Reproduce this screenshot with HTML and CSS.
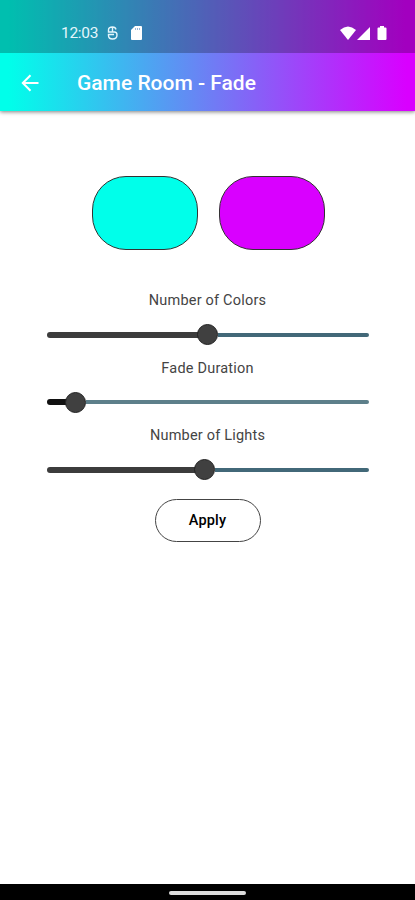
FILE: index.html
```html
<!DOCTYPE html>
<html lang="en">
<head>
    <meta charset="UTF-8">
    <meta name="viewport" content="width=device-width, initial-scale=1.0">
    <title>Game Room - Fade</title>
    <link rel="stylesheet" href="styles.css">
</head>
<body>
<div class="top">
  <div class="status">
    <span class="time">12:03</span>
    <svg class="app-icon" width="11" height="14" viewBox="0 0 11 14" fill="none" stroke="#e4f6fc" stroke-width="1.4">
      <path d="M9 3.500Q8.500 1 5.500 1Q1.500 1 1.500 4V6H7.500Q10 6 10 9Q10 13 5.500 13Q1.500 13 1.500 9.500V8.500H7M5.500 1V6"/>
    </svg>
    <svg class="sd-icon" width="11" height="14" viewBox="0 0 11 14">
      <path fill="#fff" d="M4 0H10Q11 0 11 1V13Q11 14 10 14H1Q0 14 0 13V4Z"/>
      <path stroke="#7fa5d0" stroke-width="0.8" d="M4.500 2V4M6.500 2V4M8.500 2V4"/>
    </svg>
    <svg class="signals" width="47" height="15" viewBox="0 0 47 15" fill="#fff">
      <path d="M0 4Q8-3 16 4L8 14Z"/>
      <path d="M30 1V14H17Z"/>
      <path d="M40 1.500V0H44V1.500H45.500Q46.500 1.500 46.500 2.500V13Q46.500 14 45.500 14H38.500Q37.500 14 37.500 13V2.500Q37.500 1.500 38.500 1.500Z"/>
    </svg>
  </div>
  <div class="header">
    <svg width="18" height="18" viewBox="0 0 18 18" fill="none" stroke="#fff" stroke-width="2">
      <path d="M17.500 9H2M9.500 1.300L1.800 9L9.500 16.700"/>
    </svg>
    <h1>Game Room - Fade</h1>
  </div>
</div>

<div class="content">
  <div class="colors">
    <div class="color cyan"></div>
    <div class="color purple"></div>
  </div>

  <div class="setting">
    <label>Number of Colors</label>
    <div class="slider"><div class="filled colors-fill"></div><div class="thumb"></div><div class="rest"></div></div>
  </div>
  <div class="setting">
    <label>Fade Duration</label>
    <div class="slider"><div class="filled fade-fill"></div><div class="thumb"></div><div class="rest light"></div></div>
  </div>
  <div class="setting">
    <label>Number of Lights</label>
    <div class="slider"><div class="filled lights-fill"></div><div class="thumb"></div><div class="rest"></div></div>
  </div>

  <button class="apply">Apply</button>
</div>

<div class="nav"><div class="handle"></div></div>
</body>
</html>
```

FILE: styles.css
```css
* { box-sizing: border-box; }
body {
  font-family: Roboto, sans-serif;
  margin: 0;
  height: 900px;
  display: flex;
  flex-direction: column;
  background-color: #fff;
  overflow: hidden;
}

/* Status bar and header share one gradient */
.top {
  height: 111px;
  flex: none;
  background: linear-gradient(90deg, #00ffea 2%, #d900ff 98%);
  box-shadow: 0 1px 4px rgba(0, 0, 0, 0.5);
}
.status {
  height: 53px;
  padding: 13px 28px 0 61px;
  display: flex;
  align-items: center;
  background-color: rgba(0, 0, 0, 0.25);
}
.time { width: 46px; font-size: 15.5px; letter-spacing: -0.3px; color: #e4f6fc; }
.sd-icon { margin-left: 13px; }
.signals { margin-left: auto; }
.header {
  height: 58px;
  padding: 1px 0 0 21px;
  display: flex;
  align-items: center;
}
.header h1 {
  margin: 0 0 0 38px;
  font-size: 21px;
  line-height: 26px;
  font-weight: 500;
  color: #fff;
}

.content {
  flex: 1;
  padding-top: 65px;
  display: flex;
  flex-direction: column;
  align-items: center;
}
.colors { display: flex; gap: 21px; margin: 0 0 40px 1px; }
.color { width: 106px; height: 74px; border: 1px solid #333; border-radius: 34px; }
.cyan { background-color: #00ffea; }
.purple { background-color: #d900ff; }

.setting { width: 322px; height: 67.700px; text-align: center; }
.setting label {
  display: block;
  height: 22px;
  line-height: 22px;
  font-size: 14.5px;
  letter-spacing: 0.2px;
  color: #444;
}
.slider { height: 22px; margin-top: 11.500px; display: flex; align-items: center; }
.filled { height: 6px; margin-right: -2px; border-radius: 3px 0 0 3px; background-color: #3c3c3c; }
.colors-fill { width: 152px; }
.fade-fill { width: 20.500px; background-color: #111; }
.lights-fill { width: 149.500px; }
.thumb { width: 21px; height: 21px; border: 1px solid #222; border-radius: 50%; background-color: #404040; }
.rest { flex: 1; height: 4px; border-radius: 0 2px 2px 0; background-color: #426878; }
.light { background-color: #5d7f8a; }

.apply {
  width: 106px;
  height: 43px;
  margin-top: 6px;
  border: 1px solid #444;
  border-radius: 21.500px;
  background-color: #fff;
  font-family: Roboto, sans-serif;
  font-size: 14.5px;
  font-weight: 500;
  letter-spacing: 0.2px;
  color: #000;
}

.nav {
  height: 16px;
  flex: none;
  display: flex;
  justify-content: center;
  padding-top: 7px;
  background-color: #000;
}
.handle { width: 77px; height: 4px; border-radius: 2px; background-color: #ddd; }
```
